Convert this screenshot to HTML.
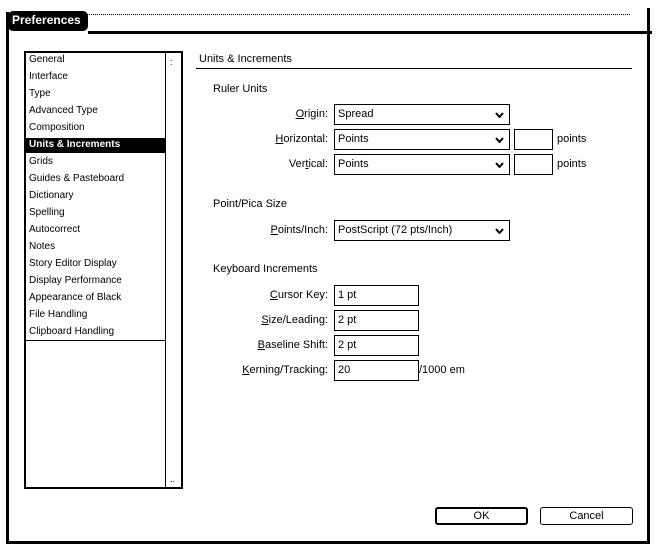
<!DOCTYPE html>
<html><head><style>
body{margin:0;width:656px;height:554px;background:#fff;position:relative;overflow:hidden;font-family:"Liberation Sans","DejaVu Sans",sans-serif;font-size:11px;color:#000}
.a{position:absolute}
.t{position:absolute;white-space:nowrap;line-height:13px}
.box{position:absolute;border:1px solid #000;background:#fff;box-sizing:border-box}
.sel{position:absolute;border:1px solid #000;box-sizing:border-box;background:#fff}
.sel span{position:absolute;left:3px;top:3px}
.sel svg{position:absolute;right:5px;top:7px}
.lbl{position:absolute;right:328px;text-align:right;white-space:nowrap}
.li{position:absolute;left:29px;white-space:nowrap;font-size:10px}
</style></head><body>
<div class="a" style="left:20px;top:14px;width:610px;border-top:1px dotted #000"></div>
<div class="a" style="left:88px;top:31px;width:564px;height:3px;background:#000"></div>
<div class="a" style="left:6px;top:12px;width:3px;height:532px;background:#000"></div>
<div class="a" style="left:647px;top:8px;width:3px;height:536px;background:#000"></div>
<div class="a" style="left:6px;top:541px;width:644px;height:3px;background:#000"></div>
<div class="a" style="left:8px;top:11px;width:80px;height:20px;background:#000;border-radius:5px"></div>
<div class="t" style="left:12px;top:14px;color:#fff;font-weight:bold;font-size:12px">Preferences</div>

<div class="box" style="left:24px;top:51px;width:159px;height:438px;border-width:2px"></div>
<div class="a" style="left:165px;top:52px;width:1px;height:436px;background:#000"></div>
<div class="a" style="left:26px;top:340px;width:139px;height:1px;background:#000"></div>
<div class="a" style="left:26px;top:138px;width:139px;height:15px;background:#000"></div>
<div class="t" style="left:170px;top:56px;font-size:9px">:</div>
<div class="t" style="left:170px;top:473px;font-size:9px">..</div>
<div class="li" style="top:54px">General</div>
<div class="li" style="top:71px">Interface</div>
<div class="li" style="top:88px">Type</div>
<div class="li" style="top:105px">Advanced Type</div>
<div class="li" style="top:122px">Composition</div>
<div class="li" style="top:139px;color:#fff;font-weight:bold">Units &amp; Increments</div>
<div class="li" style="top:156px">Grids</div>
<div class="li" style="top:173px">Guides &amp; Pasteboard</div>
<div class="li" style="top:190px">Dictionary</div>
<div class="li" style="top:207px">Spelling</div>
<div class="li" style="top:224px">Autocorrect</div>
<div class="li" style="top:241px">Notes</div>
<div class="li" style="top:258px">Story Editor Display</div>
<div class="li" style="top:275px">Display Performance</div>
<div class="li" style="top:292px">Appearance of Black</div>
<div class="li" style="top:309px">File Handling</div>
<div class="li" style="top:326px">Clipboard Handling</div>

<div class="t" style="left:199px;top:53px">Units &amp; Increments</div>
<div class="a" style="left:196px;top:68px;width:436px;height:1px;background:#000"></div>
<div class="t" style="left:213px;top:83px">Ruler Units</div>
<div class="lbl" style="top:108px"><u>O</u>rigin:</div>
<div class="sel" style="left:334px;top:104px;width:176px;height:21px"><span>Spread</span><svg width="9" height="6"><path d="M1 1L4.5 5L8 1" stroke="#000" stroke-width="2" fill="none"/></svg></div>
<div class="lbl" style="top:133px"><u>H</u>orizontal:</div>
<div class="sel" style="left:334px;top:129px;width:176px;height:21px"><span>Points</span><svg width="9" height="6"><path d="M1 1L4.5 5L8 1" stroke="#000" stroke-width="2" fill="none"/></svg></div>
<div class="box" style="left:514px;top:129px;width:39px;height:21px"></div>
<div class="t" style="left:557px;top:133px">points</div>
<div class="lbl" style="top:158px">Ver<u>t</u>ical:</div>
<div class="sel" style="left:334px;top:154px;width:176px;height:21px"><span>Points</span><svg width="9" height="6"><path d="M1 1L4.5 5L8 1" stroke="#000" stroke-width="2" fill="none"/></svg></div>
<div class="box" style="left:514px;top:154px;width:39px;height:21px"></div>
<div class="t" style="left:557px;top:158px">points</div>

<div class="t" style="left:213px;top:198px">Point/Pica Size</div>
<div class="lbl" style="top:224px"><u>P</u>oints/Inch:</div>
<div class="sel" style="left:334px;top:220px;width:176px;height:21px"><span>PostScript (72 pts/Inch)</span><svg width="9" height="6"><path d="M1 1L4.5 5L8 1" stroke="#000" stroke-width="2" fill="none"/></svg></div>

<div class="t" style="left:213px;top:263px">Keyboard Increments</div>
<div class="lbl" style="top:289px"><u>C</u>ursor Key:</div>
<div class="box" style="left:334px;top:285px;width:85px;height:21px"><span class="t" style="left:3px;top:3px">1 pt</span></div>
<div class="lbl" style="top:314px"><u>S</u>ize/Leading:</div>
<div class="box" style="left:334px;top:310px;width:85px;height:21px"><span class="t" style="left:3px;top:3px">2 pt</span></div>
<div class="lbl" style="top:339px"><u>B</u>aseline Shift:</div>
<div class="box" style="left:334px;top:335px;width:85px;height:21px"><span class="t" style="left:3px;top:3px">2 pt</span></div>
<div class="lbl" style="top:364px"><u>K</u>erning/Tracking:</div>
<div class="box" style="left:334px;top:360px;width:85px;height:21px"><span class="t" style="left:3px;top:3px">20</span></div>
<div class="t" style="left:419px;top:364px">/1000 em</div>

<div class="a" style="left:435px;top:507px;width:93px;height:18px;border:2px solid #000;border-radius:3px;box-sizing:border-box;text-align:center;line-height:14px">OK</div>
<div class="a" style="left:540px;top:507px;width:93px;height:18px;border:1px solid #000;border-radius:3px;box-sizing:border-box;text-align:center;line-height:16px">Cancel</div>
</body></html>
